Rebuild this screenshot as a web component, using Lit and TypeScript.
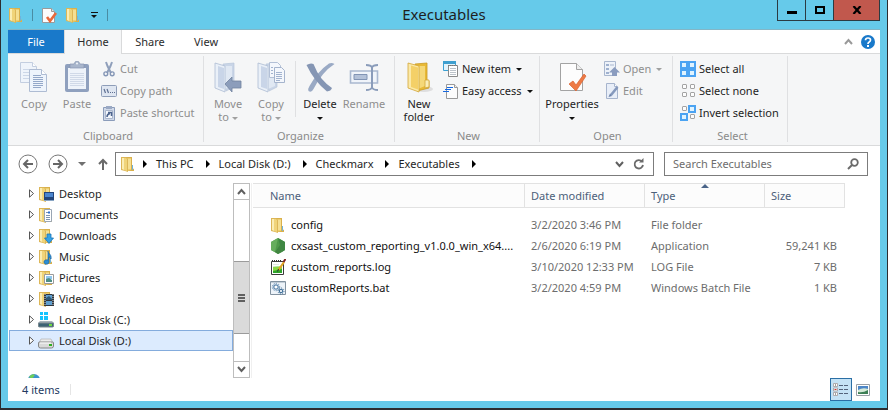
import { LitElement, html, svg, css, nothing, TemplateResult } from "lit";
import { customElement } from "lit/decorators.js";
import { classMap } from "lit/directives/class-map.js";

type Art = TemplateResult;

const icon = (w: number, h: number, art: unknown, box = `0 0 ${w} ${h}`) =>
  html`<svg width=${w} height=${h} viewBox=${box} aria-hidden="true">${art}</svg>`;

const folderArt = svg`
  <path d="M6 1h6v11l2 1v2H6z" fill="#d9b04c"/>
  <path d="M6 2h5v12l-4 1z" fill="#edcf70"/>
  <path d="M8 3h3v10H8z" fill="#f5df92"/>
  <path d="M1 1h5l2 2v13l-3-1-4-1z" fill="#dcb657"/>
  <path d="M2 2h2v12l-2-1z" fill="#fbedb4"/>
  <path d="M4 2h2l1 1v12l-3-1z" fill="#f0d47a"/>
  <path d="M12.500 9v5" stroke="#6fb3dc" stroke-width="1"/>`;
const folder16 = (over: unknown = nothing) => icon(16, 16, svg`${folderArt}${over}`);

const docArt = svg`
  <path d="M1.500 1.500h9l3 3v11h-12z" fill="#fcfcfc" stroke="#9a9a9a"/>
  <path d="M10.500 1.500v3h3" fill="#e4e4e4" stroke="#9a9a9a"/>`;

const icons: Record<string, () => Art> = {
  folder: () => folder16(),
  desktop: () => folder16(svg`<path d="M6 6h10v8H6z" fill="#24467c"/><path d="M7 7h8v4H7z" fill="#4b86d0"/><path d="M6 14h10v1H6z" fill="#8aa6c4"/>`),
  documents: () => folder16(svg`<path d="M6.500 2.500h7v12h-7z" fill="#fff" stroke="#9aa6b4"/><path d="M8 5.500h2M8 8.500h4M8 10.500h4M8 12.500h4" stroke="#7c93b0"/><path d="M10 5.500h2" stroke="#2d6fd0" stroke-width="2"/>`),
  downloads: () => folder16(svg`<path d="M9 6h4v4h2.500L11 15.500 6.500 10H9z" fill="#36a3e6" stroke="#1a74b8" stroke-width=".8"/>`),
  music: () => folder16(svg`<path d="M10 2c0 3 4 3 3 8-1-2-2-2-2-2v5c0 3-5 3-5 0 0-2 2-2.500 4-2z" fill="#2c8fd6" stroke="#155d98" stroke-width=".6"/>`),
  pictures: () => folder16(svg`<path d="M6.500 4.500h9v9h-9z" fill="#fff" stroke="#9b9b9b"/><path d="M8 6h6v3H8z" fill="#8fc6ee"/><path d="M8 9l3-1 3 2v2H8z" fill="#4f8f86"/>`),
  videos: () => folder16(svg`<path d="M6 3h10v12H6z" fill="#30363c"/><path d="M8 4h6v5H8zM8 10h6v4H8z" fill="#5f9fd0"/><path d="M8 7l3-2 3 3v1H8z" fill="#2d5876"/><path d="M7 3v12M15 3v12" stroke="#cdd3d8" stroke-dasharray="1 1"/>`),
  diskC: () => icon(16, 16, svg`<path d="M2 0h3v3H2zM6 0h4v3H6zM2 4h3v4H2zM6 4h4v4H6z" fill="#14c4ff"/>
    <path d="M2 9h12l2 2v3q0 1-1 1H1q-1 0-1-1v-3z" fill="#a9b4bb"/><path d="M.5 11h15v3q0 1-1 1h-13q-1 0-1-1z" fill="#3d6275" stroke="#79888f"/><path d="M11 12h3v2h-3z" fill="#6fdc3e"/>`),
  diskD: () => icon(16, 16, svg`<path d="M3 6h10l2 4H1z" fill="#ececec" stroke="#b3b3b3" stroke-width=".7"/><path d="M.5 10q0-1 1-1h13q1 0 1 1v3q0 2-2 2h-11q-2 0-2-2z" fill="#d9d9d9" stroke="#868686"/><path d="M2 10h11" stroke="#fff"/><path d="M11 11h3v2h-3z" fill="#2fae20"/>`),
  hex: () => icon(16, 16, svg`<path d="M8 0l7 4v8l-7 4-7-4V4z" fill="#4f9a4a"/><path d="M8 0l7 4v8l-3 2z" fill="#3f8743"/><path d="M8 0L1 4v8l4 2z" fill="#66ad5d"/><path d="M5 14l3 2 4-2-2-7z" fill="#418641"/>`),
  log: () => icon(16, 16, svg`<path d="M1.500 2.500h12v13h-12z" fill="#fff" stroke="#3b3b3b"/><path d="M2 1.500h10" stroke="#333" stroke-dasharray="1 1"/><path d="M3 5.500h6M3 7.500h5" stroke="#dfeae0"/><path d="M3 8l9-1v7H3z" fill="#8ad845"/><path d="M3 12l9-2v4H3z" fill="#2fa52c"/><path d="M14 3L8.500 11" stroke="#e0a526" stroke-width="2.200"/><path d="M15.500 0l-2 3" stroke="#7c1f1f" stroke-width="2"/><path d="M8.500 10L7.500 12.500" stroke="#333"/>`),
  bat: () => icon(16, 16, svg`<path d="M.5 1.500h15v13H.500z" fill="#edf3f9" stroke="#8292a0"/><path d="M1 2h14v1H1z" fill="#c3ced8"/><circle cx="6" cy="7" r="2.200" fill="#fff" stroke="#5f88ae" stroke-width="1.200"/><circle cx="6" cy="7" r="3.700" fill="none" stroke="#5f88ae" stroke-dasharray="1.200 1.200"/><circle cx="11" cy="11" r="1.700" fill="#fff" stroke="#45739b" stroke-width="1.200"/><circle cx="11" cy="11" r="3" fill="none" stroke="#45739b" stroke-dasharray="1.100 1.200"/>`),
  docCheck: () => icon(16, 16, svg`${docArt}<path d="M6 10l3 4 6-8" fill="none" stroke="#e8683a" stroke-width="2.600"/>`),
  cut: () => icon(16, 16, svg`<path d="M5 1l1.500 4L10 12M11 1L9.500 5 6 12" fill="none" stroke="#8f9fbb" stroke-width="2"/><circle cx="4.800" cy="12.800" r="1.900" fill="none" stroke="#8496b6" stroke-width="1.400"/><circle cx="11.200" cy="12.800" r="1.900" fill="none" stroke="#8496b6" stroke-width="1.400"/>`),
  path: () => icon(16, 16, svg`<rect x=".5" y="2.500" width="15" height="11" rx="1" fill="#dfe6f1" stroke="#8e9db8"/><path d="M3 6l1.500 4M6 6l1.500 4" stroke="#5e6f92" stroke-width="1.200"/><path d="M9 9.500h1M11 9.500h1M13 9.500h1" stroke="#5e6f92"/>`),
  shortcut: () => icon(16, 16, svg`<path d="M2.500 2.500h11v13h-11z" fill="#cfd8e8" stroke="#8b9cba"/><path d="M5 1h6v3H5z" fill="#9aa9c4"/><path d="M4.500 5.500h7v8h-7z" fill="#f5f8fd" stroke="#aab6cc"/><path d="M6 12q0-3 3-3.500M7 7.500h3.500V11" fill="none" stroke="#4e658f" stroke-width="1.500"/>`),
  newItem: () => icon(16, 16, svg`<path d="M.5.5h12v9H.5z" fill="#e3f3fb" stroke="#3aa0d4"/><path d="M0 0h13v3H0z" fill="#3f9fcf"/><path d="M5.500 4.500h9v11h-9z" fill="#fff" stroke="#8a8a8a"/><path d="M5 4.500h10" stroke="#777" stroke-dasharray="1 1"/><path d="M7 7.500h6M7 9.500h6M7 11.500h6M7 13.500h6" stroke="#bcc3ca"/>`),
  easy: () => icon(16, 16, svg`<path d="M3.500 1.500h8l3 3v11h-11z" fill="#fcfcfc" stroke="#999"/><path d="M11.500 1.500v3h3" fill="#eee" stroke="#999"/><path d="M4 4.500h6M2 6.500h6M0 8.500h6" stroke="#1769e0"/>`),
  open: () => icon(16, 16, svg`<path d="M.5.5h11v14H.5z" fill="#edf2f9" stroke="#a9b7ce"/><path d="M2 3h3v2H2zM2 7h3v2H2zM2 11h3v2H2z" fill="#9fb1cf"/><path d="M6 4h4" stroke="#a9b7ce"/><path d="M10.500 6l5.500 5.500h-3V15H8v-3.500H5z" fill="#8a9cbf"/>`),
  edit: () => icon(16, 16, svg`<path d="M2.500.5h8l3 3v12h-11z" fill="#e8eef8" stroke="#a6b4cd"/><path d="M10.500.5v3h3" fill="#fff" stroke="#a6b4cd"/><path d="M13.500 4L7 12" stroke="#8599bd" stroke-width="2.600"/><path d="M6 10.500L4.500 14 8 13z" fill="#6c82aa"/>`),
  selAll: () => tiles([1, 1, 1, 1]),
  selNone: () => tiles([0, 0, 0, 0]),
  selInvert: () => tiles([0, 1, 1, 0]),

  copyBig: () => icon(30, 32, svg`
    <path d="M1.500 1.500h12l4 4v16h-16z" fill="#eff4fb" stroke="#c3cee0"/><path d="M13.500 1.500v4h4" fill="#fff" stroke="#c3cee0"/>
    <path d="M4 8.500h10M4 11.500h10M4 14.500h10M4 17.500h10" stroke="#ccd7e8"/>
    <path d="M10.500 8.500h12l5 5v17h-17z" fill="#eef4fc" stroke="#aebcd3"/><path d="M22.500 8.500v5h5" fill="#fff" stroke="#aebcd3"/>
    <path d="M14 14.500h8M14 16.500h10M14 18.500h10M14 20.500h10M14 22.500h10M14 24.500h10M14 26.500h8" stroke="#94a8c9"/>`),
  pasteBig: () => icon(30, 32, svg`
    <rect x="3" y="3" width="24" height="28" rx="2" fill="#8fa0be"/><path d="M6 7h18v21H6z" fill="#eef3fa"/>
    <path d="M8 12.500h14M8 14.500h14M8 16.500h14M8 18.500h14M8 20.500h14M8 22.500h14M8 24.500h14" stroke="#d0d9e8"/>
    <path d="M8 3h4q1-3 3-3t3 3h4v4H8z" fill="#a9b6cc" stroke="#8696b3" stroke-width=".7"/><circle cx="15" cy="2.500" r="1" fill="#f1f4f9"/>`),
  moveBig: () => icon(30, 32, svg`${paleFolder}<path d="M12 23l7-7v4h9v7h-9v4z" fill="#8c9dbb" stroke="#71839f" stroke-width=".8"/>`),
  copyToBig: () => icon(30, 32, svg`${paleFolder}
    <path d="M13.500 1.500h8l3 3v12h-11z" fill="#f4f7fc" stroke="#b3c0d6"/><path d="M18.500 6.500h7l3 3v12h-10z" fill="#f4f7fc" stroke="#a5b4cd"/>
    <path d="M20 11.500h6M20 13.500h6M20 15.500h6M20 17.500h6M20 19.500h4M15 6.500h2M15 9.500h2M15 12.500h2" stroke="#a2b3cf"/>`),
  deleteBig: () => icon(30, 32, svg`
    <path d="M29.500 3Q17 11 8.500 28q-2 4-5 2-1-2 1-5Q13 10 24 2.500q3-1 5.500.5z" fill="#9aaac5"/>
    <path d="M1.500 4q4-2.500 7-1 3 8 8 14.500 5 6 10.500 9.500-1 3-5 3.500Q9 20 1.500 4z" fill="#8596b4"/>`),
  renameBig: () => icon(30, 32, svg`
    <path d="M1.500 10h27v12h-27z" fill="#f0f4fa" stroke="#a9b8d0" stroke-width="1.600"/><path d="M5 13.500h13v5H5z" fill="#b3c1d8" stroke="#8194b4"/>
    <path d="M17 4q5 0 6 2.500v20q-1 2.500-6 2.500M29 4q-5 0-6 2.500M23 26.500q1 2.500 6 2.500" fill="none" stroke="#8a9cba" stroke-width="2"/>`),
  newFolderBig: () => icon(30, 32, svg`
    <ellipse cx="20" cy="28" rx="9" ry="3" fill="#dededf"/>
    <path d="M11 3l12-1v17l2 1v7l-12 3z" fill="#e8b936" stroke="#c99a25" stroke-width=".8"/>
    <path d="M13 5h8v20l-7 3z" fill="#f5d878"/>
    <path d="M4 2l11 3v26L4 27z" fill="#fbe9a8" stroke="#d3a637" stroke-width=".8"/><path d="M7 4.500l7 2v22l-7-2.500z" fill="#f4d067"/>
    <path d="M21 19h4v7l-4 1z" fill="#faeeb8" stroke="#d3a637" stroke-width=".8"/>`),
  propsBig: () => icon(30, 32, svg`
    <path d="M3.500 2.500h16l6 6v21h-22z" fill="#fdfdfd" stroke="#a3a3a3"/><path d="M19.500 2.500v6h6" fill="#eee" stroke="#a3a3a3"/>
    <path d="M12 23l4-3 3 4 8-11 2 2-10 15z" fill="#ee7a45" stroke="#d9622f" stroke-width=".7"/>`),
};

const paleFolder = svg`
  <path d="M10 3l11-1v24l-8 4z" fill="#c9d5e7" stroke="#b7c5da" stroke-width=".7"/>
  <path d="M12 5h7v20l-7 3z" fill="#e0e8f3"/>
  <path d="M2 2l10 3v26L2 27z" fill="#eaf0f8" stroke="#adbcd3" stroke-width=".8"/><path d="M5 5l6 2v21l-6-2z" fill="#c9d5e8"/>`;

function tiles(on: number[]): Art {
  return icon(16, 16, on.map((v, i) => {
    const x = (i % 2) * 8, y = Math.floor(i / 2) * 8;
    return v
      ? svg`<rect x=${x} y=${y} width="8" height="8" fill="#4ba3f2"/><rect x=${x + 2} y=${y + 2} width="4" height="4" fill="#dff3ff"/>`
      : svg`<rect x=${x + 2.5} y=${y + 1.5} width="4" height="4" rx=".5" fill="#fdfdfd" stroke="#a3a3a3"/>`;
  }));
}

const caret = (cls = "") => html`<i class="caret ${cls}"></i>`;

interface Big { label: string; icon: string; off?: boolean; drop?: boolean; w: number; second?: string }
interface Small { label: string; icon: string; off?: boolean; drop?: boolean }

const groups: { name: string; cls: string; big: (Big | null)[]; small: Small[] }[] = [
  { name: "Clipboard", cls: "g-clip", big: [
      { label: "Copy", icon: "copyBig", off: true, w: 42 }, { label: "Paste", icon: "pasteBig", off: true, w: 42 }],
    small: [{ label: "Cut", icon: "cut", off: true }, { label: "Copy path", icon: "path", off: true }, { label: "Paste shortcut", icon: "shortcut", off: true }] },
  { name: "Organize", cls: "g-org", big: [
      { label: "Move", second: "to", icon: "moveBig", off: true, drop: true, w: 42 },
      { label: "Copy", second: "to", icon: "copyToBig", off: true, drop: true, w: 42 }, null,
      { label: "Delete", icon: "deleteBig", drop: true, w: 42 }, { label: "Rename", icon: "renameBig", off: true, w: 44 }], small: [] },
  { name: "New", cls: "g-new", big: [{ label: "New", second: "folder", icon: "newFolderBig", w: 42 }],
    small: [{ label: "New item", icon: "newItem", drop: true }, { label: "Easy access", icon: "easy", drop: true }] },
  { name: "Open", cls: "g-open", big: [{ label: "Properties", icon: "propsBig", drop: true, w: 58 }],
    small: [{ label: "Open", icon: "open", off: true, drop: true }, { label: "Edit", icon: "edit", off: true }] },
  { name: "Select", cls: "g-sel", big: [],
    small: [{ label: "Select all", icon: "selAll" }, { label: "Select none", icon: "selNone" }, { label: "Invert selection", icon: "selInvert" }] },
];

const crumbs = ["This PC", "Local Disk (D:)", "Checkmarx", "Executables"];
const tree = [
  ["Desktop", "desktop"], ["Documents", "documents"], ["Downloads", "downloads"], ["Music", "music"],
  ["Pictures", "pictures"], ["Videos", "videos"], ["Local Disk (C:)", "diskC"], ["Local Disk (D:)", "diskD"],
];
const files = [
  ["config", "folder", "3/2/2020 3:46 PM", "File folder", ""],
  ["cxsast_custom_reporting_v1.0.0_win_x64....", "hex", "2/6/2020 6:19 PM", "Application", "59,241 KB"],
  ["custom_reports.log", "log", "3/10/2020 12:33 PM", "LOG File", "7 KB"],
  ["customReports.bat", "bat", "3/2/2020 4:59 PM", "Windows Batch File", "1 KB"],
];

@customElement("app-root")
export class AppRoot extends LitElement {
  static styles = css`
    :host { display: flex; flex-direction: column; min-height: 100vh; box-sizing: border-box;
      background: #2d2d30; color: #1e1e1e; padding: 0 1px 0 1px;
      font: 11px/16px "Noto Sans", "Open Sans", sans-serif; }
    * { box-sizing: border-box; }
    svg { display: block; flex: none; }
    button { font: inherit; color: inherit; background: none; border: 0; padding: 0; margin: 0; display: flex; align-items: center; white-space: nowrap; }
    .window { flex: 1; display: flex; flex-direction: column; background: #66caea; padding: 0 7px 7px; }
    .title { display: grid; grid-template-columns: 1fr auto 1fr; height: 29px; }
    .quick { display: flex; align-items: center; gap: 8px; }
    .bar { width: 1px; height: 12px; background: #4a8ca3; }
    .quick .more { width: 10px; flex-direction: column; gap: 2px; }
    .quick .more::before { content: ""; width: 7px; height: 1px; background: #111; }
    h1 { margin: 0; font-size: 15px; line-height: 28px; font-weight: 400; }
    .controls { display: flex; justify-content: flex-end; align-items: flex-start; }
    .controls button { height: 21px; width: 28px; border: 1px solid #2b3b42; border-top: 0; border-right: 0; justify-content: center; }
    .controls .close { width: 47px; background: #c1584d; border-right: 1px solid #2b3b42; }

    .client { flex: 1; display: flex; flex-direction: column; background: #fff; border-top: 1px solid #83b6c6; }
    .tabs { display: flex; height: 24px; border-bottom: 1px solid #d9dadb; padding-right: 4px; }
    .tabs button { justify-content: center; width: 56px; height: 24px; color: #2b2b2b; }
    .tabs .file { background: #1979ca; color: #fff; height: 23px; }
    .tabs .home { width: 58px; background: #f5f6f7; border: 1px solid #d9dadb; border-width: 0 1px; }
    .tabs .fill { flex: 1; }
    .tabs .fold { width: 24px; height: 23px; }
    .tabs .help { width: 16px; height: 23px; }

    .ribbon { display: flex; background: #f5f6f7; border-bottom: 1px solid #d9dadb; height: 92px; padding: 2px 0 3px; }
    .group { display: flex; flex-direction: column; border-right: 1px solid #dfe0e2; }
    .g-clip { width: 196px; padding-left: 5px; } .g-org { width: 191px; padding-left: 3px; } .g-new { width: 145px; padding-left: 3px; }
    .g-open { width: 133px; padding-left: 3px; } .g-sel { width: 115px; padding-left: 5px; }
    .items { flex: 1; display: flex; gap: 1px; }
    .name { height: 14px; line-height: 16px; text-align: center; color: #8a8a8a; }
    .big { flex-direction: column; padding-top: 5px; height: 70px; line-height: 13px; }
    .big svg { margin-bottom: 4px; }
    .big .caret { display: inline-block; vertical-align: middle; }
    .vsep { width: 1px; height: 56px; background: #dfe0e2; margin: 5px 2px 0; }
    .smalls { display: flex; flex-direction: column; padding-top: 2px; }
    .small { height: 22px; gap: 3px; padding-left: 2px; }
    .small .caret { margin-left: 2px; }
    .off { color: #8e8e8e; }
    .caret { border: 3px solid transparent; border-top-color: #111; border-bottom: 0; }
    .off .caret { border-top-color: #a0a0a0; }
    .caret.grey { border-width: 4px; border-bottom: 0; border-top-color: #707070; }

    .nav { display: flex; align-items: center; padding: 6px 12px 7px 10px; height: 37px; }
    .arrows { display: flex; align-items: center; width: 97px; gap: 10px; }
    .arrows .up { width: 14px; justify-content: center; }
    .address { flex: 1; height: 24px; display: flex; align-items: center; border: 1px solid #7c7c7c; padding: 0 4px; min-width: 0; }
    .address .crumb { margin-left: 9px; gap: 12px; }
    .address svg + .tri { margin-left: 7px; }
    .tri { border: 4px solid transparent; border-left-color: #000; border-right: 0; width: 4px; height: 8px; }
    .address .fill { flex: 1; }
    .address .tool { width: 20px; justify-content: center; }
    .search { width: 204px; height: 24px; margin-left: 10px; border: 1px solid #7c7c7c; display: flex; align-items: center; padding: 0 8px; }
    .search input { flex: 1; min-width: 0; border: 0; outline: 0; padding: 0; background: none; font: inherit; }
    .search input::placeholder { color: #6d6d6d; opacity: 1; }

    .panes { flex: 1; display: flex; min-height: 0; }
    .side { width: 225px; display: flex; flex-direction: column; padding: 0 0 0 1px; }
    .node { height: 21px; padding-left: 19px; gap: 5px; width: 100%; border: 1px solid transparent; }
    .node .exp { margin-right: -1px; }
    .node.sel { background: #dcebfe; border-color: #84acdd; }
    .peek { height: 5px; margin-top: auto; padding-left: 18px; overflow: hidden; }
    .scroll { width: 17px; border: 1px solid #bdbdbd; display: flex; flex-direction: column; }
    .scroll button { height: 16px; justify-content: center; }
    .scroll .up { border-bottom: 1px solid #bdbdbd; } .scroll .down { border-top: 1px solid #bdbdbd; }
    .scroll .before { flex: 62; } .scroll .after { flex: 27; }
    .scroll .thumb { flex: 72; background: #dadada; border: 1px solid #9b9b9b; border-width: 1px 0; display: flex; flex-direction: column; align-items: center; justify-content: center; gap: 1px; }
    .thumb i { width: 7px; height: 2px; background: #606060; }
    .list { flex: 1; border-left: 1px solid #f0f0f0; margin-left: 1px; padding-left: 1px; min-width: 0; }
    table { border-collapse: separate; border-spacing: 0; table-layout: fixed; width: 592px; }
    .c-name { width: 272px; } .c-mid { width: 120px; } .c-size { width: 80px; }
    th { text-align: left; font-weight: 400; color: #4c607a; background: #fcfcfc; border: 1px solid #e2e2e2; border-left: 0; height: 25px; padding: 0 0 0 6px; position: relative; }
    th:first-child, td:first-child { padding-left: 17px; }
    thead::after { content: ""; display: block; height: 6px; }
    td { height: 21px; padding: 0 0 0 6px; color: #6d6d6d; white-space: nowrap; }
    td:first-child { color: #111; }
    td:last-child { text-align: right; padding-right: 8px; }
    .fname { display: flex; align-items: center; gap: 5px; }
    .sort { position: absolute; top: 0; left: 56px; border: 4px solid transparent; border-bottom-color: #4a6488; border-top: 0; }

    .status { display: flex; align-items: center; height: 23px; color: #23395f; padding: 0 6px 0 14px; }
    .status .div { width: 1px; height: 11px; background: #e5e5e5; margin-left: 10px; }
    .status .fill { flex: 1; }
    .view { width: 22px; height: 23px; justify-content: center; }
    .view.on { background: #c5e2f5; border: 1px solid #2b6fa5; }
    .behind { height: 2px; }
  `;

  private renderBig(b: Big | null) {
    if (!b) return html`<span class="vsep"></span>`;
    return html`<button class=${classMap({ big: true, off: !!b.off })} style="width:${b.w}px">
      ${icons[b.icon]()}<span>${b.label}${b.second || b.drop ? html`<br />` : nothing}${b.second ?? nothing}${b.drop ? html` ${caret()}` : nothing}</span>
    </button>`;
  }

  private renderSmall(s: Small) {
    return html`<button class=${classMap({ small: true, off: !!s.off })}>
      ${icons[s.icon]()}<span>${s.label}</span>${s.drop ? caret() : nothing}</button>`;
  }

  private chevron(d: string, c = "#606060") {
    return icon(9, 7, svg`<path d=${d} fill="none" stroke=${c} stroke-width="2"/>`);
  }

  render() {
    const circle = (d: string) => icon(20, 20, svg`<circle cx="10" cy="10" r="9" fill="#fff" stroke="#777"/><path d=${d} fill="none" stroke="#666" stroke-width="2"/>`);
    return html`
      <div class="window">
        <header class="title">
          <div class="quick">
            ${icons.folder()}<span class="bar"></span>
            <button aria-label="Properties">${icons.docCheck()}</button>
            <button aria-label="New folder">${icons.folder()}</button>
            <button class="more" aria-label="Customize toolbar">${caret()}</button>
            <span class="bar"></span>
          </div>
          <h1>Executables</h1>
          <div class="controls">
            <button aria-label="Minimize">${icon(10, 10, svg`<path d="M0 6h10v3H0z"/>`)}</button>
            <button aria-label="Maximize">${icon(10, 8, svg`<path d="M1 1h8v6H1z" fill="none" stroke="#000" stroke-width="2"/>`)}</button>
            <button class="close" aria-label="Close">${icon(10, 8, svg`<path d="M1.500 0l7 8M8.500 0l-7 8" stroke="#000" stroke-width="2.200"/>`)}</button>
          </div>
        </header>
        <main class="client">
          <nav class="tabs">
            <button class="file">File</button><button class="home">Home</button><button>Share</button><button>View</button>
            <span class="fill"></span>
            <button class="fold" aria-label="Collapse ribbon">${this.chevron("M1 6l3.500-4L8 6", "#999")}</button>
            <button class="help" aria-label="Help">${icon(14, 14, svg`<circle cx="7" cy="7" r="7" fill="#1979ca"/><path d="M4.500 5.300q0-2.300 2.500-2.300t2.500 2q0 1.200-1.300 1.900T7 9" fill="none" stroke="#fff" stroke-width="1.700"/><path d="M6 10h2v2H6z" fill="#fff"/>`)}</button>
          </nav>
          <section class="ribbon">
            ${groups.map((g) => html`<div class="group ${g.cls}">
              <div class="items">${g.big.map((b) => this.renderBig(b))}
                ${g.small.length ? html`<div class="smalls">${g.small.map((s) => this.renderSmall(s))}</div>` : nothing}</div>
              <div class="name">${g.name}</div></div>`)}
          </section>
          <div class="nav">
            <div class="arrows">
              <button aria-label="Back">${circle("M15 10H6M10 6l-4 4 4 4")}</button>
              <button aria-label="Forward">${circle("M5 10h9M10 6l4 4-4 4")}</button>
              <button aria-label="Recent locations">${caret("grey")}</button>
              <button class="up" aria-label="Up">${icon(10, 12, svg`<path d="M5 12V2M1 6l4-4 4 4" fill="none" stroke="#6a6a6a" stroke-width="2"/>`)}</button>
            </div>
            <div class="address">
              ${icons.folder()}<i class="tri"></i>
              ${crumbs.map((c) => html`<button class="crumb"><span>${c}</span><i class="tri"></i></button>`)}
              <span class="fill"></span>
              <button class="tool" aria-label="Previous locations">${this.chevron("M1 1l3.500 4L8 1")}</button>
              <button class="tool" aria-label="Refresh">${icon(12, 12, svg`<path d="M9 3.500A4.200 4.200 0 1 0 10 7" fill="none" stroke="#6a6a6a" stroke-width="1.800"/><path d="M6 4.500h4.500V0z" fill="#6a6a6a"/>`)}</button>
            </div>
            <label class="search"><input type="text" placeholder="Search Executables" aria-label="Search Executables" />
              ${icon(12, 12, svg`<circle cx="7.500" cy="4.500" r="3.300" fill="none" stroke="#6a6a6a" stroke-width="1.800"/><path d="M5 7l-4 4" stroke="#6a6a6a" stroke-width="2"/>`)}</label>
          </div>
          <div class="panes">
            <div class="side">
              ${tree.map(([t, i], n) => html`<button class=${classMap({ node: true, sel: n === tree.length - 1 })}>
                <span class="exp">${icon(5, 9, svg`<path d="M.5.800v7.400l4-3.700z" fill="#fff" stroke="#555"/>`)}</span>${icons[i]()}<span>${t}</span></button>`)}
              <div class="peek">${icon(14, 14, svg`<circle cx="7" cy="7" r="6" fill="#3d93cf"/><path d="M2 4q3-4 6-2L5 6z" fill="#6fcf5a"/>`)}</div>
            </div>
            <div class="scroll">
              <button class="up" aria-label="Scroll up">${this.chevron("M1 6l3.500-4L8 6")}</button>
              <span class="before"></span><span class="thumb"><i></i><i></i><i></i></span><span class="after"></span>
              <button class="down" aria-label="Scroll down">${this.chevron("M1 1l3.500 4L8 1")}</button>
            </div>
            <div class="list">
              <table>
                <colgroup><col class="c-name" /><col class="c-mid" /><col class="c-mid" /><col class="c-size" /></colgroup>
                <thead><tr><th>Name</th><th>Date modified</th><th>Type<i class="sort"></i></th><th>Size</th></tr></thead>
                <tbody>${files.map(([n, i, d, t, s]) => html`<tr><td><span class="fname">${icons[i]()}<span>${n}</span></span></td><td>${d}</td><td>${t}</td><td>${s}</td></tr>`)}</tbody>
              </table>
            </div>
          </div>
          <footer class="status">
            <span>4 items</span><span class="div"></span><span class="fill"></span>
            <button class="view on" aria-label="Details view">${icon(16, 13, svg`<path d="M.5.5h4v3h-4zM.5 5h4v3h-4zM.5 9.500h4v3h-4z" fill="#fff" stroke="#a59a9a" stroke-width=".8"/><path d="M2 2h1M2 11h1" stroke="#444"/><path d="M1.500 6.500h2" stroke="#c33"/><path d="M6 2.500h4M11 2.500h4M6 6.500h4M11 6.500h4M6 10.500h4M11 10.500h4" stroke="#53627a"/>`)}</button>
            <button class="view" aria-label="Large icons view">${icon(14, 12, svg`<path d="M.5.5h13v11H.5z" fill="#fff" stroke="#9aa0a6"/><path d="M2 2h10v4H2z" fill="#4c86c8"/><path d="M2 6q5-3 10-1v5H2z" fill="#d5ead8"/><path d="M2 8q5 1 10-2v4H2z" fill="#3d7f55"/>`)}</button>
          </footer>
        </main>
      </div>
      <div class="behind"></div>
    `;
  }
}
